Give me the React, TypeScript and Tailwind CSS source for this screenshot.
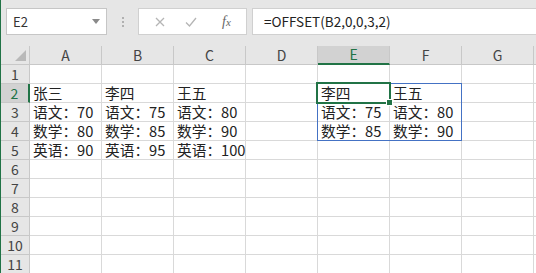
const COLS = ["A", "B", "C", "D", "E", "F", "G"]

const CELLS: Record<string, string> = {
  A2: "张三", B2: "李四", C2: "王五",
  A3: "语文：70", B3: "语文：75", C3: "语文：80",
  A4: "数学：80", B4: "数学：85", C4: "数学：90",
  A5: "英语：90", B5: "英语：95", C5: "英语：100",
  E2: "李四", F2: "王五",
  E3: "语文：75", F3: "语文：80",
  E4: "数学：85", F4: "数学：90",
}

const cellFont = { fontFamily: '"Noto Sans CJK SC", "Noto Sans", sans-serif' }

function FormulaBar() {
  return (
    <div className="flex h-[46px] shrink-0 items-start bg-[#e6e6e6] pt-[8px]" style={cellFont}>
      <div className="ml-[5px] flex h-[27px] w-[101px] items-center justify-between border border-[#c6c6c6] bg-white pl-[6px] pr-[6px]">
        <span className="text-[13px] text-[#333]">E2</span>
        <svg width="8" height="5" viewBox="0 0 8 5">
          <path d="M0 0 L8 0 L4 5 Z" fill="#8a8a8a" />
        </svg>
      </div>
      <div className="flex h-[27px] w-[31px] flex-col items-center justify-center gap-[2px]">
        <div className="h-[2px] w-[2px] bg-[#b0b0b0]" />
        <div className="h-[2px] w-[2px] bg-[#b0b0b0]" />
        <div className="h-[2px] w-[2px] bg-[#b0b0b0]" />
      </div>
      <div className="flex h-[27px] w-[109px] items-center border border-[#d0d0d0] bg-white">
        <div className="flex w-[40px] justify-center pl-[1px]">
          <svg width="10" height="10" viewBox="0 0 10 10">
            <path d="M1 1 L9 9 M9 1 L1 9" stroke="#b5b5b5" strokeWidth="1.3" />
          </svg>
        </div>
        <div className="flex w-[24px] justify-center">
          <svg width="12" height="10" viewBox="0 0 12 10">
            <path d="M1 5.5 L4.5 9 L11 1" stroke="#b5b5b5" strokeWidth="1.3" fill="none" />
          </svg>
        </div>
        <div className="flex flex-1 justify-center pl-[4px]">
          <span className="text-[14px] italic text-[#666]" style={{ fontFamily: '"Liberation Serif", serif' }}>
            f<span className="text-[11px]">x</span>
          </span>
        </div>
      </div>
      <div className="ml-[5px] flex h-[27px] flex-1 items-center border border-r-0 border-[#d0d0d0] bg-white pl-[11px]">
        <span className="text-[13.5px] text-[#222]">=OFFSET(B2,0,0,3,2)</span>
      </div>
    </div>
  )
}

function Sheet() {
  const rows = Array.from({ length: 11 }, (_, i) => i + 1)
  return (
    <div className="relative flex-1" style={cellFont}>
      <div className="grid grid-cols-[29px_repeat(7,72px)_1fr] grid-rows-[19px_repeat(11,19px)] bg-white">
        {/* column headers */}
        <div className="relative border-b border-r border-[#c8c8c8] bg-[#e6e6e6]">
          <svg className="absolute bottom-[3px] right-[3px]" width="11" height="11" viewBox="0 0 11 11">
            <path d="M11 0 L11 11 L0 11 Z" fill="#b9b9b9" />
          </svg>
        </div>
        {COLS.map((c) => (
          <div
            key={c}
            className={
              c === "E"
                ? "flex items-center justify-center border-b-2 border-r border-b-[#217346] border-r-[#c8c8c8] bg-[#d2d2d2] text-[14px] text-[#217346]"
                : "flex items-center justify-center border-b border-r border-[#c8c8c8] bg-[#e6e6e6] text-[14px] text-[#444]"
            }
          >
            {c}
          </div>
        ))}
        <div className="border-b border-[#c8c8c8] bg-[#e6e6e6]" />

        {rows.map((r) => (
          <div key={r} className="contents">
            <div
              className={
                r === 2
                  ? "flex items-center justify-center border-b border-r-2 border-b-[#c8c8c8] border-r-[#217346] bg-[#d2d2d2] text-[14px] text-[#217346]"
                  : "flex items-center justify-center border-b border-r border-[#c8c8c8] bg-[#e6e6e6] text-[14px] text-[#444]"
              }
            >
              {r}
            </div>
            {COLS.map((c) => (
              <div
                key={c}
                className="flex items-center whitespace-nowrap border-b border-r border-[#d9d9d9] pl-[3px] pt-[1px] text-[14.7px] leading-none text-[#222]"
              >
                {CELLS[c + r]}
              </div>
            ))}
            <div className="border-b border-[#d9d9d9]" />
          </div>
        ))}
      </div>

      {/* selected range E2:F4 */}
      <div className="pointer-events-none absolute left-[316px] top-[37px] h-[58px] w-[145px] border border-[#4472c4]" />
      {/* active cell E2 */}
      <div className="pointer-events-none absolute left-[315px] top-[36px] h-[22px] w-[75px] border-2 border-[#217346]" />
      <div className="pointer-events-none absolute left-[385px] top-[53px] h-[7px] w-[7px] border border-white bg-[#217346]" />
    </div>
  )
}

export default function App() {
  return (
    <div className="flex h-[273px] w-[536px] overflow-hidden bg-white">
      <div className="w-px shrink-0 bg-[#217346]" />
      <div className="flex flex-1 flex-col">
        <FormulaBar />
        <Sheet />
      </div>
    </div>
  )
}
